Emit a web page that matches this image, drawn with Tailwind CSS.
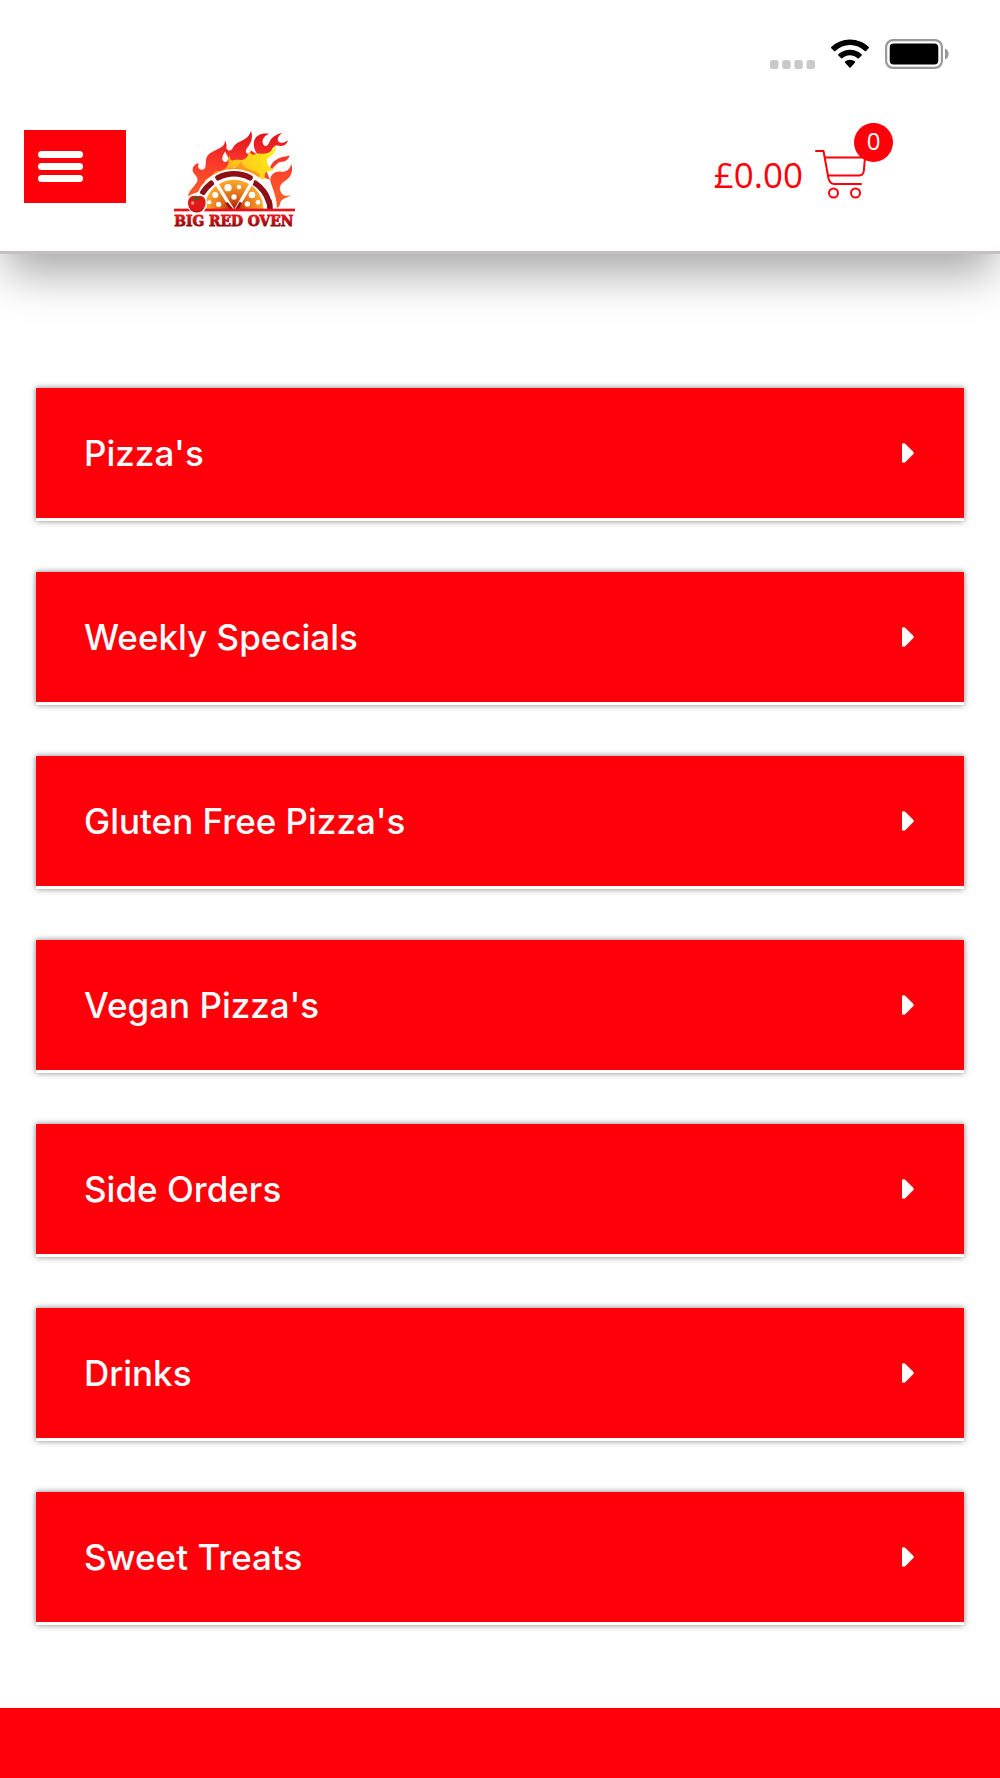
<!DOCTYPE html>
<html lang="en">
<head>
  <meta charset="UTF-8" />
  <title>Menu | Big Red Oven</title>
  <meta name="viewport" content="width=device-width, initial-scale=1.0" />
  <script src="https://cdn.jsdelivr.net/npm/@tailwindcss/browser@4"></script>
</head>
<body class="min-h-screen flex flex-col bg-white font-['Inter',sans-serif]">

  <header class="border-b-3 border-[#c8bfc0] bg-white shadow-[0_24px_44px_-6px_rgba(0,0,0,0.36)]">
    <!-- Status bar -->
    <div class="flex items-end justify-end gap-4 h-[69px] pr-[51px]">
      <svg class="w-[45px] h-[9px]" viewBox="0 0 45 9" fill="#c9c9c9" aria-hidden="true">
        <rect x="0" width="8.500" height="9" rx="2.500" />
        <rect x="12.200" width="8.500" height="9" rx="2.500" />
        <rect x="24.300" width="8.500" height="9" rx="2.500" />
        <rect x="36.500" width="8.500" height="9" rx="2.500" />
      </svg>
      <svg class="w-[38px] h-[30px]" viewBox="0 0 38 30" aria-hidden="true">
        <path d="M19 .5c7.300 0 13.800 2.800 18.700 7.500.4.4.4.9 0 1.300l-2.700 2.800c-.4.400-.9.400-1.300 0A21 21 0 0 0 19 6 21 21 0 0 0 4.300 12.100c-.4.400-.9.400-1.300 0L.3 9.300c-.4-.4-.4-.9 0-1.300A27 27 0 0 1 19 .5z" />
        <path d="M19 10.700c4.500 0 8.500 1.700 11.600 4.500.4.4.4.9 0 1.300l-2.800 2.800c-.3.300-.8.300-1.200 0A11.200 11.200 0 0 0 19 16.300c-2.900 0-5.600 1.100-7.600 3-.4.3-.9.3-1.200 0l-2.800-2.800c-.4-.4-.4-.9 0-1.300A17 17 0 0 1 19 10.700z" />
        <path d="M19 20.800c1.900 0 3.500.7 4.900 1.800.4.300.4.800 0 1.200l-4.300 4.600c-.3.400-.9.400-1.200 0l-4.300-4.600c-.4-.4-.4-.9 0-1.200 1.400-1.100 3-1.800 4.900-1.800z" />
      </svg>
      <svg class="w-16 h-[30px]" viewBox="0 0 64 30" aria-hidden="true">
        <rect x="1.100" y="1.100" width="55.800" height="27.800" rx="7" fill="none" stroke="#999" stroke-width="2.200" />
        <rect x="4.700" y="4.500" width="48.600" height="21" rx="4" />
        <path d="M60 9.500c2.200.8 3.600 2.900 3.600 5.500s-1.400 4.700-3.600 5.500z" fill="#999" />
      </svg>
    </div>

    <div class="flex items-start justify-between h-[182px] pt-[54px] pl-6 pr-[107px]">
      <div class="flex items-start gap-12">
        <button type="button" aria-label="Open menu" class="mt-[7px] flex h-[73px] w-[102px] flex-col justify-center gap-[5px] bg-[#ff000b] pl-[14px]">
          <span class="h-[7px] w-[45px] rounded-full bg-white"></span>
          <span class="h-[7px] w-[45px] rounded-full bg-white"></span>
          <span class="h-[7px] w-[45px] rounded-full bg-white"></span>
        </button>

        <a href="#" aria-label="Big Red Oven home" class="mt-1.5">
          <svg class="w-[122px] h-[103px]" viewBox="42 28 366 309">
            <defs>
              <linearGradient id="fire" gradientUnits="userSpaceOnUse" x1="0" y1="34" x2="0" y2="225">
                <stop offset="0" stop-color="#e0101c" />
                <stop offset=".5" stop-color="#fa3a2c" />
                <stop offset="1" stop-color="#ff5a2a" />
              </linearGradient>
              <linearGradient id="flame" gradientUnits="userSpaceOnUse" x1="345" y1="95" x2="140" y2="215">
                <stop offset="0" stop-color="#fff01a" />
                <stop offset=".5" stop-color="#ffc41a" />
                <stop offset="1" stop-color="#ff7a1a" />
              </linearGradient>
              <radialGradient id="cheese" gradientUnits="userSpaceOnUse" cx="222" cy="268" r="90">
                <stop offset="0" stop-color="#b01808" />
                <stop offset=".45" stop-color="#dd6a18" />
                <stop offset="1" stop-color="#ffae30" />
              </radialGradient>
              <linearGradient id="word" gradientUnits="userSpaceOnUse" x1="0" y1="284" x2="0" y2="320">
                <stop offset="0" stop-color="#ee1a1e" />
                <stop offset="1" stop-color="#8c0a0c" />
              </linearGradient>
            </defs>
            <!-- Flames -->
            <g fill="url(#fire)">
              <path d="M84 230C88 208 106 200 112 184C116 168 96 164 98 148C99 138 108 132 117 131C111 142 116 150 126 150C140 150 136 134 138 120C141 102 158 96 174 88C188 82 197 74 194 61C203 74 200 90 194 98C186 110 184 120 192 126C202 130 208 118 202 108C196 98 192 90 199 84C202 94 212 96 218 86C224 70 244 66 258 56C266 50 270 42 273 33C280 52 274 70 262 84C254 94 258 104 266 102C272 100 272 94 272 92C284 100 298 108 310 122L318 150L330 180L300 170L222 142L150 180L120 214Z" />
              <path d="M300 112C284 98 278 78 283 62C290 44 308 40 327 42C314 48 304 58 309 72C313 84 324 80 328 68C334 52 348 44 366 40C354 50 350 58 356 66C364 72 374 70 384 62C380 76 370 82 356 78C344 76 338 84 334 94L320 112Z" />
              <path d="M330 146C334 128 346 120 360 114C370 110 380 112 389 107C386 120 376 127 362 127C352 128 346 140 334 150Z" />
              <path d="M332 188C326 168 344 154 362 156C378 158 390 150 394 132C400 154 394 170 378 182C362 192 356 202 362 216C368 230 382 230 394 226C382 234 368 236 362 246C358 254 362 260 350 264C352 240 340 212 332 188Z" />
            </g>
            <path fill="url(#flame)" d="M132 216C128 188 134 176 148 172C162 168 158 154 176 154C194 152 206 140 206 126C203 118 204 112 210 110C208 120 214 124 222 122C234 118 242 124 254 118C264 112 266 102 268 94C272 104 278 108 286 104C296 98 302 104 314 102C330 100 342 90 346 76C350 90 346 100 334 108C322 114 318 122 322 132C326 144 334 144 342 150C330 156 320 152 316 160C312 168 318 176 308 180L268 150L222 142L170 160L140 192Z" />
            <path fill="#ff9a1c" d="M158 176C180 160 204 152 224 152C250 150 276 160 296 176L300 164C286 152 262 150 250 138C246 134 244 130 248 124C234 132 238 142 224 144C204 144 176 156 158 176Z" />
            <!-- Pizza -->
            <path fill="#fff" d="M102 268a120 120 0 0 1 240 0z" />
            <path fill="url(#cheese)" d="M134 268a88 88 0 0 1 176 0z" />
            <g fill="none" stroke="#8c1016" stroke-width="17">
              <path stroke-linecap="round" d="M174 174a106 106 0 0 1 96 0" />
              <path stroke-linecap="round" d="M128 219a105 105 0 0 1 26-28" />
              <path stroke-linecap="round" d="M286 191a105 105 0 0 1 40 54" />
              <path d="M326 243q4 10 4 25" />
            </g>
            <path fill="none" stroke="#fff" stroke-width="10" d="M161 178l57 92M278 184l-50 86" />
            <path fill="#a0140e" d="M208 268l-12-18 7-2 17 20zM226 268l13-22 7 4-9 18z" />
            <g fill="#fff">
              <circle cx="166" cy="226" r="9" /><circle cx="204" cy="204" r="11" />
              <circle cx="237" cy="202" r="7" /><circle cx="222" cy="232" r="8" />
              <circle cx="276" cy="226" r="10" /><circle cx="294" cy="248" r="7" />
              <circle cx="262" cy="253" r="8" /><circle cx="176" cy="254" r="8" />
              <circle cx="148" cy="248" r="6" />
            </g>
            <rect x="42" y="267" width="363" height="8" fill="#ee1018" />
            <!-- Tomato -->
            <circle cx="111" cy="251" r="31" fill="#fff" />
            <path fill="#e01a18" d="M110 230c16-6 28 4 27 20-1 16-12 28-27 28s-26-12-26-28c0-16 12-26 26-20z" />
            <path fill="#b01010" d="M88 266c10 10 32 12 44-2-4 10-12 14-22 14s-18-4-22-12z" />
            <path fill="#2f6a1c" d="M108 226l4 7 12-2-9 5 5 6-9-3-7 7 1-8-10-2 11-3z" />
            <circle cx="98" cy="250" r="5" fill="#ff8a78" />
            <text x="43" y="319" font-family="'DejaVu Serif Condensed','DejaVu Serif',serif" font-weight="700" font-size="46" fill="url(#word)" stroke="url(#word)" stroke-width="2.500">BIG RED OVEN</text>
          </svg>
        </a>
      </div>

      <!-- Basket -->
      <a href="#" aria-label="Basket, £0.00, 0 items" class="relative flex items-end gap-3 h-[76px] pr-[26px] text-[#ff000b]">
        <span class="font-['Open_Sans',sans-serif] text-[35px] leading-[48px]">£0.00</span>
        <svg class="w-[52px] h-[50px]" viewBox="0 0 52 50" fill="none" stroke="currentColor" stroke-width="2" stroke-linecap="round" stroke-linejoin="round" aria-hidden="true">
          <path d="M1 2h7.500l5 27.500c.9 3.500 2.500 5.500 6 5.500H46" />
          <path d="M10 8.500h40l-1.200 13.500c-.3 3-1.800 4.500-4.800 4.500H13" />
          <circle cx="18.500" cy="44" r="4.500" />
          <circle cx="40.500" cy="44" r="4.500" />
        </svg>
        <span class="absolute right-0 top-0 flex size-[39px] items-center justify-center rounded-full bg-[#ff000b] pb-1 font-['Open_Sans',sans-serif] text-2xl text-white">0</span>
      </a>
    </div>
  </header>

  <!-- Menu categories -->
  <main class="flex flex-col gap-[51px] px-9 pt-[134px] pb-[83px] text-[35px] font-medium text-white">
    <button type="button" class="flex h-[133px] items-center justify-between border-b-3 border-white bg-[#ff000b] pr-[50px] pl-12 text-left shadow-[0_0_6px_rgba(0,0,0,0.5)]">
      Pizza's
      <svg class="w-3 h-5" viewBox="0 0 12 20" fill="currentColor" aria-hidden="true"><path d="M0 1.800C0 .2 2 -.4 3.200.800l8 8c.7.700.7 1.700 0 2.400l-8 8C2 20.400 0 19.800 0 18.200z" /></svg>
    </button>
    <button type="button" class="flex h-[133px] items-center justify-between border-b-3 border-white bg-[#ff000b] pr-[50px] pl-12 text-left shadow-[0_0_6px_rgba(0,0,0,0.5)]">
      Weekly Specials
      <svg class="w-3 h-5" viewBox="0 0 12 20" fill="currentColor" aria-hidden="true"><path d="M0 1.800C0 .2 2 -.4 3.200.800l8 8c.7.700.7 1.700 0 2.400l-8 8C2 20.400 0 19.800 0 18.200z" /></svg>
    </button>
    <button type="button" class="flex h-[133px] items-center justify-between border-b-3 border-white bg-[#ff000b] pr-[50px] pl-12 text-left shadow-[0_0_6px_rgba(0,0,0,0.5)]">
      Gluten Free Pizza's
      <svg class="w-3 h-5" viewBox="0 0 12 20" fill="currentColor" aria-hidden="true"><path d="M0 1.800C0 .2 2 -.4 3.200.800l8 8c.7.700.7 1.700 0 2.400l-8 8C2 20.400 0 19.800 0 18.200z" /></svg>
    </button>
    <button type="button" class="flex h-[133px] items-center justify-between border-b-3 border-white bg-[#ff000b] pr-[50px] pl-12 text-left shadow-[0_0_6px_rgba(0,0,0,0.5)]">
      Vegan Pizza's
      <svg class="w-3 h-5" viewBox="0 0 12 20" fill="currentColor" aria-hidden="true"><path d="M0 1.800C0 .2 2 -.4 3.200.800l8 8c.7.700.7 1.700 0 2.400l-8 8C2 20.400 0 19.800 0 18.200z" /></svg>
    </button>
    <button type="button" class="flex h-[133px] items-center justify-between border-b-3 border-white bg-[#ff000b] pr-[50px] pl-12 text-left shadow-[0_0_6px_rgba(0,0,0,0.5)]">
      Side Orders
      <svg class="w-3 h-5" viewBox="0 0 12 20" fill="currentColor" aria-hidden="true"><path d="M0 1.800C0 .2 2 -.4 3.200.800l8 8c.7.700.7 1.700 0 2.400l-8 8C2 20.400 0 19.800 0 18.200z" /></svg>
    </button>
    <button type="button" class="flex h-[133px] items-center justify-between border-b-3 border-white bg-[#ff000b] pr-[50px] pl-12 text-left shadow-[0_0_6px_rgba(0,0,0,0.5)]">
      Drinks
      <svg class="w-3 h-5" viewBox="0 0 12 20" fill="currentColor" aria-hidden="true"><path d="M0 1.800C0 .2 2 -.4 3.200.800l8 8c.7.700.7 1.700 0 2.400l-8 8C2 20.400 0 19.800 0 18.200z" /></svg>
    </button>
    <button type="button" class="flex h-[133px] items-center justify-between border-b-3 border-white bg-[#ff000b] pr-[50px] pl-12 text-left shadow-[0_0_6px_rgba(0,0,0,0.5)]">
      Sweet Treats
      <svg class="w-3 h-5" viewBox="0 0 12 20" fill="currentColor" aria-hidden="true"><path d="M0 1.800C0 .2 2 -.4 3.200.800l8 8c.7.700.7 1.700 0 2.400l-8 8C2 20.400 0 19.800 0 18.200z" /></svg>
    </button>
  </main>

  <footer class="flex-1 bg-[#ff000b]"></footer>

</body>
</html>
